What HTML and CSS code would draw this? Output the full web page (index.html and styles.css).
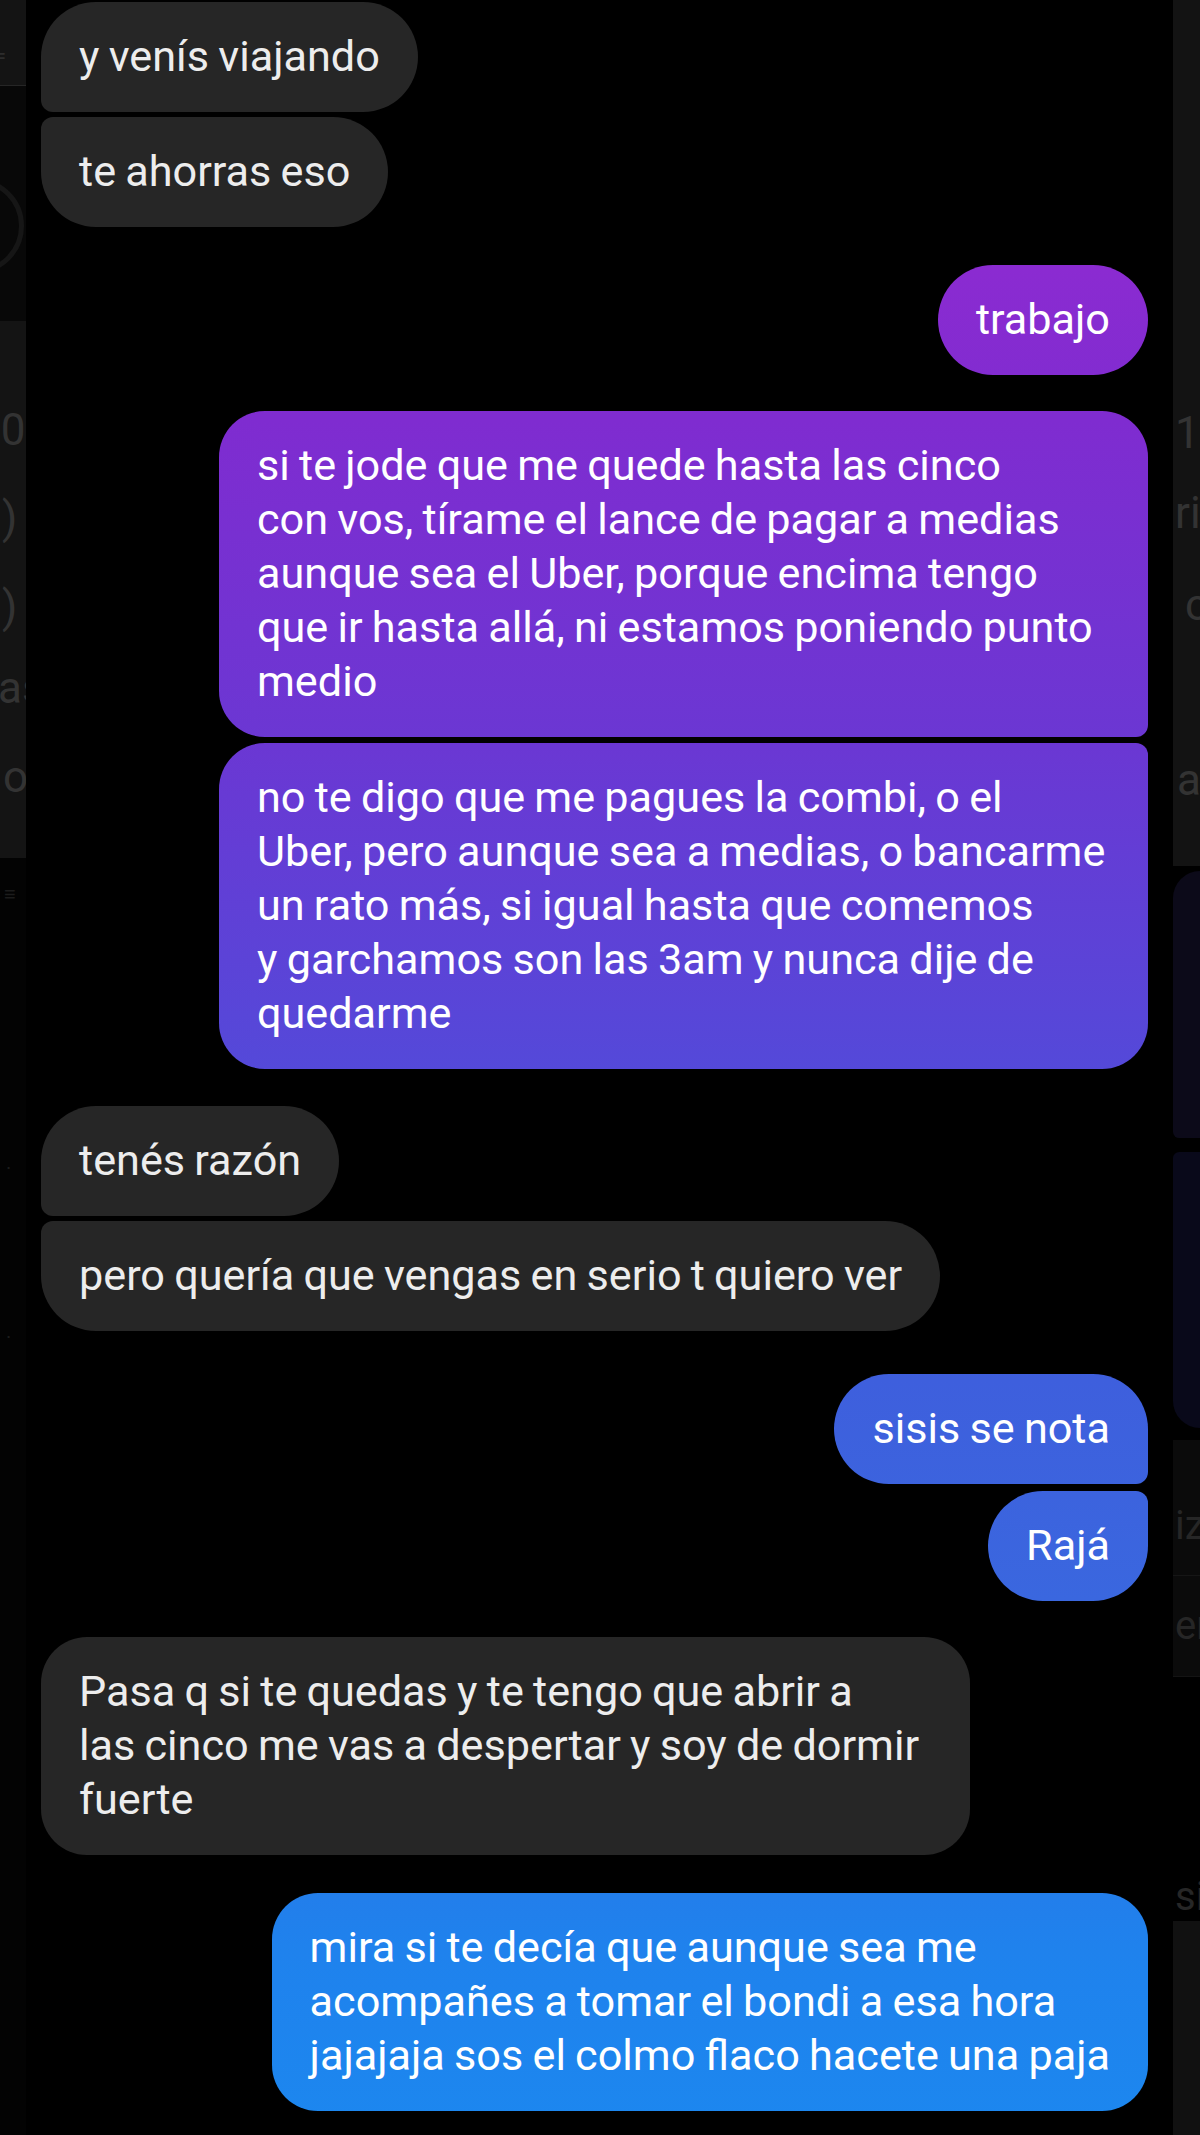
FILE: index.html
```html
<!DOCTYPE html>
<html lang="es">
<head>
<meta charset="utf-8">
<title>Chat</title>
<link rel="stylesheet" href="styles.css">
</head>
<body>
<div class="screen">
  <aside class="edge edge-l">
    <div class="el-top"><span class="ghost g-dash">=</span></div>
    <div class="el-dark"><div class="arc"></div></div>
    <div class="el-list">
      <div class="ghost gl1">10</div>
      <div class="ghost gl2">)</div>
      <div class="ghost gl3">)</div>
      <div class="ghost gl4">as</div>
      <div class="ghost gl5">o</div>
    </div>
    <div class="el-rest">
      <div class="ghost-s gs1">≡</div>
      <div class="ghost-s gs2">·</div>
      <div class="ghost-s gs3">·</div>
    </div>
  </aside>

  <main class="chat">
    <div class="bubble in one first-l">y venís viajando</div>
    <div class="bubble in one last-l near">te ahorras eso</div>

    <div class="bubble out one grad gap-38">trabajo</div>

    <div class="bubble out max grad first-r gap-36">si te jode que me quede hasta las cinco<br>con vos, tírame el lance de pagar a medias<br>aunque sea el Uber, porque encima tengo<br>que ir hasta allá, ni estamos poniendo punto<br>medio</div>
    <div class="bubble out max grad last-r near6">no te digo que me pagues la combi, o el<br>Uber, pero aunque sea a medias, o bancarme<br>un rato más, si igual hasta que comemos<br>y garchamos son las 3am y nunca dije de<br>quedarme</div>

    <div class="bubble in one first-l gap-37">tenés razón</div>
    <div class="bubble in one last-l near">pero quería que vengas en serio t quiero ver</div>

    <div class="bubble out one grad first-r gap-43">sisis se nota</div>
    <div class="bubble out one grad last-r near7">Rajá</div>

    <div class="bubble in max gap-36">Pasa q si te quedas y te tengo que abrir a<br>las cinco me vas a despertar y soy de dormir<br>fuerte</div>

    <div class="bubble out grad gap-38">mira si te decía que aunque sea me<br>acompañes a tomar el bondi a esa hora<br>jajajaja sos el colmo flaco hacete una paja</div>
  </main>

  <aside class="edge edge-r">
    <div class="er-top">
      <div class="ghost gr1">10</div>
      <div class="ghost gr2">ri</div>
      <div class="ghost gr3">c</div>
      <div class="ghost gr4">a</div>
    </div>
    <div class="er-card er-card1"></div>
    <div class="er-card er-card2"></div>
    <div class="er-row er-row1"><span class="ghost-m">iz</span></div>
    <div class="er-row er-row2"><span class="ghost-m">en</span></div>
    <div class="er-gap"></div>
    <div class="er-si"><span class="ghost-m">si</span></div>
    <div class="er-bottom"></div>
  </aside>
</div>
</body>
</html>
```

FILE: styles.css
```css
* { box-sizing: border-box; }

html, body {
  margin: 0;
  padding: 0;
  background: #000;
}

body {
  font-family: Roboto, "Noto Sans", "Liberation Sans", sans-serif;
}

.screen {
  display: flex;
  width: 1200px;
  height: 2135px;
  overflow: hidden;
  background: #000;
}

/* ---------- chat column ---------- */
.chat {
  flex: 1;
  display: flex;
  flex-direction: column;
  padding: 2px 25px 0 15px;
  min-width: 0;
}

.bubble {
  font-size: 43.2px;
  line-height: 54px;
  word-spacing: -1.5px;
  padding: 28px 38px;
  white-space: nowrap;
  border-radius: 46px;
  color: #fff;
  flex: none;
}

.bubble.one { border-radius: 55px; }

.bubble.in {
  align-self: flex-start;
  background: #262626;
  color: #ededed;
}

.bubble.out { align-self: flex-end; }

.bubble.grad {
  background-image: linear-gradient(to bottom,
    #9628d4 0px,
    #8b2bd1 265px,
    #7f2cd0 420px,
    #6b37d3 740px,
    #5449d9 1070px,
    #3e5fdd 1380px,
    #3a67df 1600px,
    #2a75e6 1760px,
    #1f82ed 1950px,
    #1c87ef 2135px);
  background-attachment: fixed;
  background-color: #5a45d8;
}

.bubble.max { width: 929px; }

/* grouped corners */
.in.first-l { border-bottom-left-radius: 12px; }
.in.last-l { border-top-left-radius: 12px; }
.out.first-r { border-bottom-right-radius: 12px; }
.out.last-r { border-top-right-radius: 12px; }

/* vertical rhythm */
.near { margin-top: 5px; }
.near6 { margin-top: 6px; }
.near7 { margin-top: 7px; }
.gap-36 { margin-top: 36px; }
.gap-37 { margin-top: 37px; }
.gap-38 { margin-top: 38px; }
.gap-43 { margin-top: 43px; }

/* ---------- side strips (remnants of other screens) ---------- */
.edge {
  flex: none;
  display: flex;
  flex-direction: column;
  overflow: hidden;
}

.edge-l { width: 26px; }
.edge-r { width: 27px; }

.ghost {
  font-size: 44px;
  line-height: 54px;
  color: #333;
  white-space: nowrap;
}

.ghost-s {
  font-size: 20px;
  line-height: 24px;
  color: #1c1c1c;
  white-space: nowrap;
}

.ghost-m {
  font-size: 40px;
  line-height: 50px;
  color: #262626;
  white-space: nowrap;
}

/* left strip */
.el-top {
  height: 86px;
  background: #141414;
  border-bottom: 1px solid #262626;
  padding-top: 44px;
}
.g-dash {
  display: block;
  font-size: 22px;
  line-height: 24px;
  color: #2d2d2d;
  margin-left: -6px;
}

.el-dark {
  height: 235px;
  background: #080808;
  padding-top: 92px;
}
.arc {
  width: 96px;
  height: 96px;
  margin-left: -72px;
  border-radius: 50%;
  border: 5px solid #161616;
}

.el-list {
  height: 537px;
  background: #141414;
  padding-top: 82px;
}
.gl1 { margin-left: -24px; }
.gl2 { margin-top: 34px; margin-left: 2px; }
.gl3 { margin-top: 35px; margin-left: 2px; }
.gl4 { margin-top: 27px; margin-left: -2px; }
.gl5 { margin-top: 35px; margin-left: 3px; }

.el-rest {
  flex: 1;
  background: #030303;
  padding-top: 24px;
}
.gs1 { margin-left: 4px; }
.gs2 { margin-top: 250px; margin-left: 6px; }
.gs3 { margin-top: 145px; margin-left: 6px; }

/* right strip */
.er-top {
  height: 866px;
  background: #131313;
  padding-top: 406px;
}
.gr1 { margin-left: 2px; }
.gr2 { margin-top: 26px; margin-left: 2px; }
.gr3 { margin-top: 38px; margin-left: 12px; }
.gr4 { margin-top: 121px; margin-left: 4px; }

.er-card {
  border-top-left-radius: 34px;
  border-bottom-left-radius: 34px;
}
.er-card1 {
  height: 267px;
  margin-top: 5px;
  background: #0c0a19;
  border-bottom-left-radius: 8px;
}
.er-card2 {
  height: 276px;
  margin-top: 14px;
  background: #09091a;
  border-top-left-radius: 8px;
}

.er-row {
  background: #0b0b0b;
  padding-left: 2px;
  display: flex;
  align-items: center;
}
.er-row1 {
  margin-top: 12px;
  height: 136px;
  border-bottom: 1px solid #161616;
  padding-top: 36px;
}
.er-row2 {
  height: 101px;
  border-bottom: 1px solid #141414;
}

.er-gap { height: 196px; }

.er-si {
  height: 48px;
  padding-left: 2px;
  display: flex;
  align-items: center;
}

.er-bottom {
  flex: 1;
  background: #111;
}
```
